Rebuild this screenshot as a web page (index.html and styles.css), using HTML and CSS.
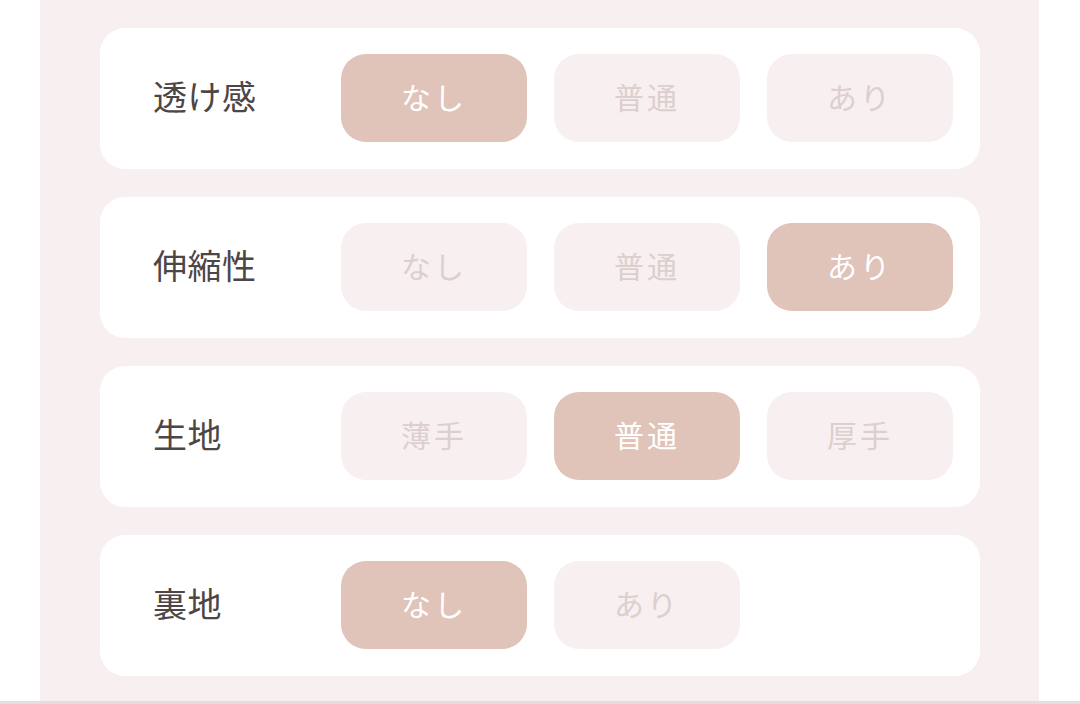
FILE: index.html
```html
<!DOCTYPE html>
<html lang="ja">
<head>
<meta charset="utf-8">
<link rel="stylesheet" href="styles.css">
</head>
<body>
<div class="page">
  <div class="panel">
    <div class="card">
      <div class="label">透け感</div>
      <div class="opts">
        <div class="opt active">なし</div>
        <div class="opt">普通</div>
        <div class="opt">あり</div>
      </div>
    </div>
    <div class="card">
      <div class="label">伸縮性</div>
      <div class="opts">
        <div class="opt">なし</div>
        <div class="opt">普通</div>
        <div class="opt active">あり</div>
      </div>
    </div>
    <div class="card">
      <div class="label">生地</div>
      <div class="opts">
        <div class="opt">薄手</div>
        <div class="opt active">普通</div>
        <div class="opt">厚手</div>
      </div>
    </div>
    <div class="card">
      <div class="label">裏地</div>
      <div class="opts">
        <div class="opt active">なし</div>
        <div class="opt">あり</div>
      </div>
    </div>
  </div>
  <div class="bottomline"></div>
</div>
</body>
</html>
```
FILE: styles.css
```css
* { box-sizing: border-box; }
html, body { margin: 0; padding: 0; background: #ffffff; }
body {
  width: 1080px;
  height: 704px;
  overflow: hidden;
  font-family: "Noto Sans CJK JP", "Noto Sans", sans-serif;
}
.page {
  display: flex;
  flex-direction: column;
  height: 704px;
}
.panel {
  margin: 0 40px 0 40px;
  width: 999px;
  height: 701px;
  background: #f8eff0;
  padding: 28px 59px 0 60px;
  display: flex;
  flex-direction: column;
  gap: 28px;
}
.card {
  background: #ffffff;
  border-radius: 25px;
  height: 141px;
  padding: 26px 27px 0 53px;
  display: flex;
  align-items: flex-start;
}
.label {
  width: 188px;
  height: 88px;
  padding-bottom: 6px;
  display: flex;
  align-items: center;
  font-size: 34px;
  color: #4d4646;
  letter-spacing: 0.5px;
}
.opts {
  display: grid;
  grid-template-columns: repeat(3, 186px);
  column-gap: 27px;
}
.opt {
  height: 88px;
  border-radius: 25px;
  background: #f8eff0;
  color: #dccfce;
  font-size: 30px;
  padding-bottom: 4px;
  display: flex;
  align-items: center;
  justify-content: center;
  letter-spacing: 3px;
}
.opt.active {
  background: #e0c3b9;
  color: #ffffff;
}
.bottomline {
  height: 3px;
  background: #e3dfdf;
}
```
